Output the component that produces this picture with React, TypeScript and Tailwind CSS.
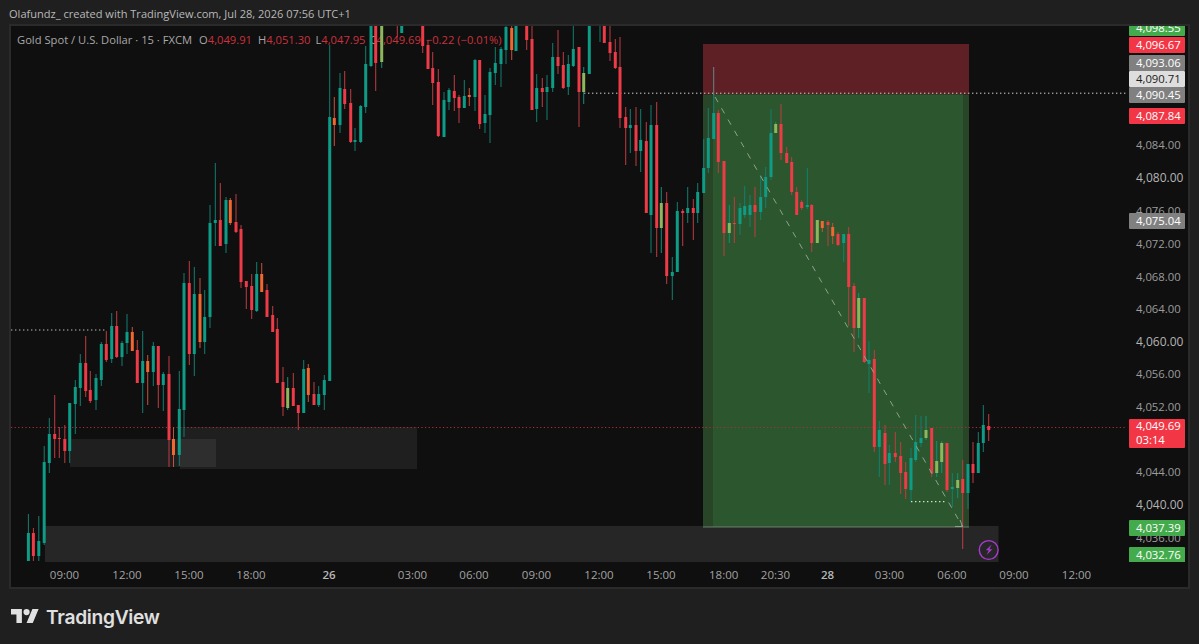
// App.tsx - TradingView snapshot of XAUUSD 15m with short position tool
type Tone = "g" | "r" | "o" | "y"
// x, tone, wick top, body top, body bottom, wick bottom (page pixels)
type Candle = [number, Tone, number, number, number, number]

const candles: Candle[] = [
  [28.4, "g", 514, 533, 561, 561], [33.4, "r", 528, 533, 556, 561], [38.8, "g", 516, 541, 556, 561], [44.2, "g", 446, 462, 543, 545],
  [49.3, "g", 418, 434, 463, 473], [54.7, "r", 395, 434, 439, 458], [59.3, "r", 427, 438, 439, 458], [64.8, "r", 425, 439, 451, 463],
  [69.7, "g", 403, 403, 451, 463], [75.3, "g", 380, 387, 404, 434], [80.3, "g", 354, 363, 388, 406], [85.7, "r", 336, 363, 391, 397],
  [90.3, "r", 371, 390, 401, 403], [96, "g", 374, 378, 400, 410], [101.3, "g", 342, 344, 380, 386], [106.3, "r", 331, 344, 360, 362],
  [111.7, "g", 313, 326, 359, 363], [116.7, "r", 311, 326, 357, 358], [122, "g", 341, 343, 357, 366], [127, "g", 314, 332, 343, 354],
  [132.3, "o", 327, 332, 351, 351], [137.3, "r", 340, 350, 383, 383], [142.7, "g", 331, 361, 383, 413], [147.7, "o", 355, 361, 372, 405],
  [153.3, "g", 342, 346, 372, 386], [158.3, "r", 346, 346, 385, 408], [163.3, "g", 372, 374, 385, 411], [169, "r", 356, 374, 440, 467],
  [173.5, "o", 427, 439, 455, 467], [179.3, "g", 371, 409, 455, 466], [184, "g", 273, 283, 410, 437], [189.3, "r", 261, 283, 354, 365],
  [194.3, "g", 267, 294, 354, 376], [200, "o", 278, 294, 342, 348], [204.7, "g", 290, 317, 342, 354], [210, "g", 205, 223, 317, 328],
  [215.3, "g", 163, 220, 223, 246], [220.3, "r", 183, 220, 246, 246], [226, "g", 197, 200, 244, 253], [230.3, "o", 198, 200, 223, 225],
  [236, "r", 194, 222, 232, 233], [241, "r", 225, 229, 282, 288], [246.3, "r", 281, 281, 287, 309], [251.7, "r", 274, 286, 310, 319],
  [256.7, "g", 262, 274, 311, 312], [261.7, "o", 263, 274, 292, 292], [267, "r", 284, 290, 317, 317], [272.7, "r", 306, 315, 332, 332],
  [277.3, "r", 318, 329, 383, 383], [283, "r", 367, 382, 407, 416], [287.7, "y", 377, 388, 408, 410], [293.3, "r", 373, 388, 406, 406],
  [298.3, "r", 405, 405, 413, 430], [303.7, "g", 360, 369, 413, 413], [308.3, "o", 364, 368, 395, 402], [314, "r", 382, 394, 405, 405],
  [318.7, "g", 386, 394, 405, 407], [324.3, "g", 375, 380, 395, 410], [329.7, "g", 45, 117, 381, 381], [334.3, "o", 97, 118, 125, 146],
  [340, "g", 73, 88, 125, 133], [344.7, "r", 71, 89, 104, 109], [350.7, "r", 89, 103, 142, 143], [355, "g", 128, 140, 142, 151],
  [360.7, "g", 105, 106, 142, 143], [365.7, "g", 46, 64, 107, 113], [371, "g", 20, 20, 66, 67], [375.7, "r", 20, 20, 63, 91],
  [381.7, "y", 20, 20, 62, 68], [397.3, "r", 20, 20, 20, 37], [401.7, "g", 20, 20, 33, 33], [422.7, "r", 20, 20, 46, 53],
  [428, "r", 40, 45, 69, 69], [432.7, "r", 52, 68, 83, 105], [438.3, "r", 69, 82, 136, 137], [444, "g", 92, 100, 137, 137],
  [449, "g", 88, 90, 102, 110], [454.3, "r", 75, 91, 98, 111], [459, "r", 95, 97, 108, 123], [464.3, "g", 80, 96, 108, 108],
  [469.3, "o", 88, 95, 97, 106], [475, "g", 59, 60, 97, 111], [479.7, "r", 60, 60, 124, 129], [485, "g", 95, 114, 123, 133],
  [490, "g", 68, 72, 115, 143], [495.3, "g", 47, 63, 73, 85], [501, "g", 47, 49, 64, 87], [506, "g", 25, 27, 50, 64],
  [511.7, "o", 25, 28, 50, 60], [516, "g", 20, 20, 51, 51], [526.7, "r", 20, 20, 40, 50], [532, "r", 20, 39, 110, 110],
  [536.7, "g", 74, 88, 109, 122], [542.3, "r", 78, 88, 92, 107], [547, "g", 75, 87, 92, 120], [552.7, "g", 43, 57, 88, 92],
  [558, "r", 30, 57, 66, 74], [563.3, "r", 52, 65, 88, 89], [568.3, "g", 55, 64, 87, 95], [573.3, "g", 26, 49, 66, 67],
  [579, "r", 47, 47, 92, 127], [583.7, "y", 67, 73, 92, 104], [589.3, "g", 20, 20, 74, 74], [600, "g", 20, 20, 20, 42],
  [604.3, "r", 20, 20, 43, 43], [610, "r", 20, 42, 53, 61], [615.3, "r", 39, 52, 68, 69], [620, "r", 37, 67, 118, 128],
  [625.7, "r", 107, 117, 128, 165], [630.3, "g", 109, 125, 128, 153], [636, "r", 107, 125, 151, 166], [640.7, "g", 109, 140, 151, 172],
  [646.3, "r", 122, 141, 213, 213], [651, "g", 105, 125, 215, 253], [656.7, "r", 102, 125, 228, 257], [661.3, "y", 187, 203, 228, 253],
  [666.7, "r", 192, 203, 276, 284], [672.3, "g", 257, 272, 276, 300], [677.3, "g", 202, 211, 272, 272], [682.7, "r", 209, 211, 213, 246],
  [687.7, "g", 187, 208, 213, 223], [693.3, "r", 199, 208, 213, 240], [697.7, "g", 183, 192, 213, 223], [703.7, "g", 139, 168, 193, 193],
  [708.3, "g", 108, 138, 168, 173], [713.7, "g", 95, 113, 139, 139], [718.3, "r", 110, 113, 162, 173], [724, "r", 161, 161, 233, 256],
  [729.3, "y", 205, 223, 233, 243], [734.3, "r", 197, 223, 224, 243], [740, "g", 203, 208, 224, 235], [744.7, "g", 186, 206, 215, 218],
  [750, "g", 195, 205, 215, 227], [755, "r", 187, 205, 212, 237], [760.7, "g", 175, 197, 212, 220], [765.7, "g", 167, 177, 197, 208],
  [771, "g", 109, 133, 177, 180], [775.7, "y", 122, 124, 133, 133], [781, "r", 104, 124, 153, 160], [786.7, "r", 147, 153, 163, 163],
  [791.7, "r", 157, 162, 192, 195], [796.7, "r", 187, 192, 215, 215], [801.7, "r", 200, 202, 208, 210], [807.3, "g", 168, 205, 207, 209],
  [811.7, "r", 204, 205, 243, 252], [817.3, "y", 220, 220, 243, 243], [822.3, "o", 221, 221, 228, 232], [828, "r", 220, 222, 225, 246],
  [832.7, "o", 223, 227, 236, 244], [838, "r", 232, 234, 245, 246], [843.7, "g", 234, 234, 243, 262], [848.7, "r", 227, 234, 287, 326],
  [854, "r", 283, 286, 328, 352], [858.7, "y", 293, 298, 328, 338], [864.3, "r", 298, 298, 362, 363], [869, "g", 341, 360, 364, 393],
  [874.3, "r", 350, 359, 447, 452], [879.3, "g", 421, 430, 447, 477], [885, "r", 425, 433, 464, 485], [889.3, "g", 445, 453, 463, 485],
  [895.3, "r", 432, 453, 457, 462], [900.7, "r", 442, 456, 473, 494], [905.7, "r", 462, 472, 489, 499], [911, "g", 448, 458, 490, 502],
  [915.7, "g", 415, 442, 460, 462], [921, "g", 416, 438, 443, 447], [926, "y", 416, 430, 438, 440], [931.7, "r", 428, 428, 473, 477],
  [936.7, "y", 441, 461, 473, 477], [941.7, "y", 441, 443, 462, 473], [947, "r", 443, 443, 490, 492], [952.3, "g", 473, 487, 489, 507],
  [957.7, "y", 473, 480, 488, 498], [962.7, "r", 460, 479, 493, 549], [968, "g", 464, 464, 493, 509], [973, "r", 442, 464, 473, 483],
  [978.3, "g", 432, 443, 473, 473], [983.3, "g", 405, 425, 443, 452], [988.7, "r", 414, 426, 430, 441],
]

const bodyFill: Record<Tone, string> = {
  g: "fill-[#0e9c87]",
  r: "fill-[#ee3b48]",
  o: "fill-[#f0672f]",
  y: "fill-[#8eb65c]",
}
const wickFill: Record<Tone, string> = {
  g: "fill-[#127f70]",
  r: "fill-[#bd3c42]",
  o: "fill-[#c9503a]",
  y: "fill-[#119078]",
}

const ticks = [
  { label: "4,084.00", y: 145 },
  { label: "4,080.00", y: 178, round: true },
  { label: "4,076.00", y: 211 },
  { label: "4,072.00", y: 244 },
  { label: "4,068.00", y: 277 },
  { label: "4,064.00", y: 309 },
  { label: "4,060.00", y: 342, round: true },
  { label: "4,056.00", y: 374 },
  { label: "4,052.00", y: 407 },
  { label: "4,044.00", y: 472 },
  { label: "4,040.00", y: 505, round: true },
  { label: "4,036.00", y: 538 },
]

const tags = [
  { label: "4,098.55", top: 20, h: 16, cls: "bg-[#43ab4b] text-white" },
  { label: "4,096.67", top: 36.5, h: 16, cls: "bg-[#f23645] text-white" },
  { label: "4,093.06", top: 55, h: 16, cls: "bg-[#808080] text-white" },
  { label: "4,090.71", top: 71, h: 16, cls: "bg-[#dedede] text-[#1c1c1c]" },
  { label: "4,090.45", top: 87, h: 16, cls: "bg-[#808080] text-white" },
  { label: "4,087.84", top: 107.5, h: 16, cls: "bg-[#f23645] text-white" },
  { label: "4,075.04", top: 212.5, h: 16, cls: "bg-[#808080] text-white" },
  { label: "4,037.39", top: 519.5, h: 16, cls: "bg-[#43ab4b] text-white" },
  { label: "4,032.76", top: 546.5, h: 16, cls: "bg-[#43ab4b] text-white" },
]

const times = [
  { label: "09:00", x: 64.5 },
  { label: "12:00", x: 127 },
  { label: "15:00", x: 189 },
  { label: "18:00", x: 251 },
  { label: "26", x: 329, bold: true },
  { label: "03:00", x: 412.5 },
  { label: "06:00", x: 474 },
  { label: "09:00", x: 536.5 },
  { label: "12:00", x: 599 },
  { label: "15:00", x: 661 },
  { label: "18:00", x: 723.7 },
  { label: "20:30", x: 775.5 },
  { label: "28", x: 827.5, bold: true },
  { label: "03:00", x: 889.5 },
  { label: "06:00", x: 952 },
  { label: "09:00", x: 1014 },
  { label: "12:00", x: 1076.5 },
]

function ChartDrawing() {
  return (
    <svg className="absolute inset-0 h-full w-full" viewBox="11 26 1117 536">
      {/* liquidity zones */}
      <rect x="70" y="439" width="146" height="28" className="fill-[#ffffff12]" />
      <rect x="180" y="427" width="237" height="42" className="fill-[#ffffff12]" />
      <rect x="45" y="526" width="953.5" height="36" className="fill-[#262626]" />

      {/* short position */}
      <rect x="703" y="44" width="266" height="50.5" className="fill-[#5e1f25]" />
      <rect x="703" y="94.5" width="266" height="432.5" className="fill-[#284528]" />
      <rect x="713" y="94.5" width="250" height="432.5" className="fill-[#2c562d]" />
      <rect x="703" y="526.6" width="266" height="0.8" className="fill-[#7d8f7d]" />

      {/* levels */}
      <line x1="584" x2="1127" y1="93.2" y2="93.2" strokeDasharray="1.4 2.6" className="stroke-[#d5d5d5]" />
      <line x1="11" x2="106" y1="330" y2="330" strokeDasharray="1.4 2.6" className="stroke-[#bdbdbd]" />
      <line x1="11" x2="1127" y1="427.5" y2="427.5" strokeDasharray="1.2 2.4" className="stroke-[#a8323c]" />

      {candles.map(([x, tone, wt, bt, bb, wb], i) => (
        <g key={i}>
          <rect x={x - 0.5} y={wt} width="1" height={wb - wt} className={wickFill[tone]} />
          <rect x={x - 1.5} y={bt} width="3" height={Math.max(bb - bt, 1)} className={bodyFill[tone]} />
        </g>
      ))}
      <rect x="713.2" y="67" width="1" height="28" className="fill-[#5f8a88]" />

      {/* projected path */}
      <line x1="715" x2="962.5" y1="97" y2="526.5" strokeDasharray="6 7" className="stroke-[#8fa28f]" />
      <path d="M955 526.5h7.5l-2.4-6.5" fill="none" className="stroke-[#8fa28f]" />
      <line x1="911" x2="946" y1="501.6" y2="501.6" strokeDasharray="1.4 2.6" strokeWidth="1.2" className="stroke-[#d5e0d5]" />

      {/* alert bolt */}
      <circle cx="988.7" cy="550" r="9.4" fill="none" strokeWidth="1.4" className="stroke-[#a83ad0]" />
      <path d="M991.6 544.6l-5.8 5.6h3l-2.2 4.8 5.8-5.8h-3z" className="fill-[#a83ad0]" />
    </svg>
  )
}

function Legend() {
  return (
    <div className="absolute left-[6px] top-[6px] flex items-center whitespace-nowrap text-[11.2px] leading-[15px] text-[#a8a8a8]">
      <span>Gold Spot / U.S. Dollar · 15 · FXCM</span>
      <span className="ml-[7px]">O<span className="text-[#c9323e]">4,049.91</span></span>
      <span className="ml-[6px]">H<span className="text-[#c9323e]">4,051.30</span></span>
      <span className="ml-[5px]">L<span className="text-[#c9323e]">4,047.95</span></span>
      <span className="ml-[4px]">C<span className="text-[#c9323e]">4,049.69</span></span>
      <span className="ml-[5px] text-[#c9323e]">−0.22 (−0.01%)</span>
    </div>
  )
}

function PriceAxis() {
  return (
    <div className="relative w-[60px] shrink-0 overflow-hidden text-[11.3px] leading-[16px]">
      {ticks.map((t) => (
        <div
          key={t.label}
          className={t.round ? "absolute left-[8px] text-[12px] text-[#b4b4b4]" : "absolute left-[8px] text-[#9c9c9c]"}
          style={{ top: t.y - 26 - 8 }}
        >
          {t.label}
        </div>
      ))}
      {tags.map((t) => (
        <div
          key={t.label}
          className={`absolute left-[1px] w-[56px] rounded-[1px] pl-[7px] ${t.cls}`}
          style={{ top: t.top - 26, height: t.h }}
        >
          {t.label}
        </div>
      ))}
      <div className="absolute left-[1px] top-[393px] flex h-[29px] w-[56px] flex-col rounded-[1px] bg-[#f23645] pl-[7px] leading-[14px] text-white">
        <span>4,049.69</span>
        <span>03:14</span>
      </div>
    </div>
  )
}

function TimeAxis() {
  return (
    <div className="relative h-[25px] shrink-0 text-[11.5px] text-[#a3a3a3]">
      {times.map((t) => (
        <span
          key={t.x}
          className={t.bold ? "absolute top-[3.5px] -translate-x-1/2 font-semibold text-[#b8b8b8]" : "absolute top-[3.5px] -translate-x-1/2"}
          style={{ left: t.x - 11 }}
        >
          {t.label}
        </span>
      ))}
    </div>
  )
}

export default function App() {
  return (
    <div className="flex h-[644px] w-[1199px] flex-col overflow-hidden bg-[#1f1f1f] font-['Open_Sans',sans-serif]">
      <div className="flex h-[24px] shrink-0 items-center pl-[9px] pt-[4px] text-[11.05px] text-[#b9b9b9]">
        Olafundz_ created with TradingView.com, Jul 28, 2026 07:56 UTC+1
      </div>

      <div className="ml-[9px] flex h-[565px] w-[1181px] shrink-0 flex-col border-2 border-[#2a2a2a] bg-[#0f0f0f]">
        <div className="flex h-[536px] shrink-0">
          <div className="relative flex-1 overflow-hidden">
            <Legend />
            <ChartDrawing />
          </div>
          <PriceAxis />
        </div>
        <TimeAxis />
      </div>

      <div className="flex flex-1 items-start gap-[7px] pl-[11px] pt-[16px]">
        <svg className="mt-[3px] h-[16px] w-[28px]" viewBox="0 4 36 18" fill="#e0e0e0">
          <path d="M14 22H7V11H0V4h14v18zM28 22h-8l7.5-18h8L28 22z" />
          <circle cx="20" cy="8" r="4" />
        </svg>
        <span className="font-['Inter',sans-serif] text-[19.2px] font-semibold leading-[24px] tracking-[-0.3px] text-[#e0e0e0]">
          TradingView
        </span>
      </div>
    </div>
  )
}
